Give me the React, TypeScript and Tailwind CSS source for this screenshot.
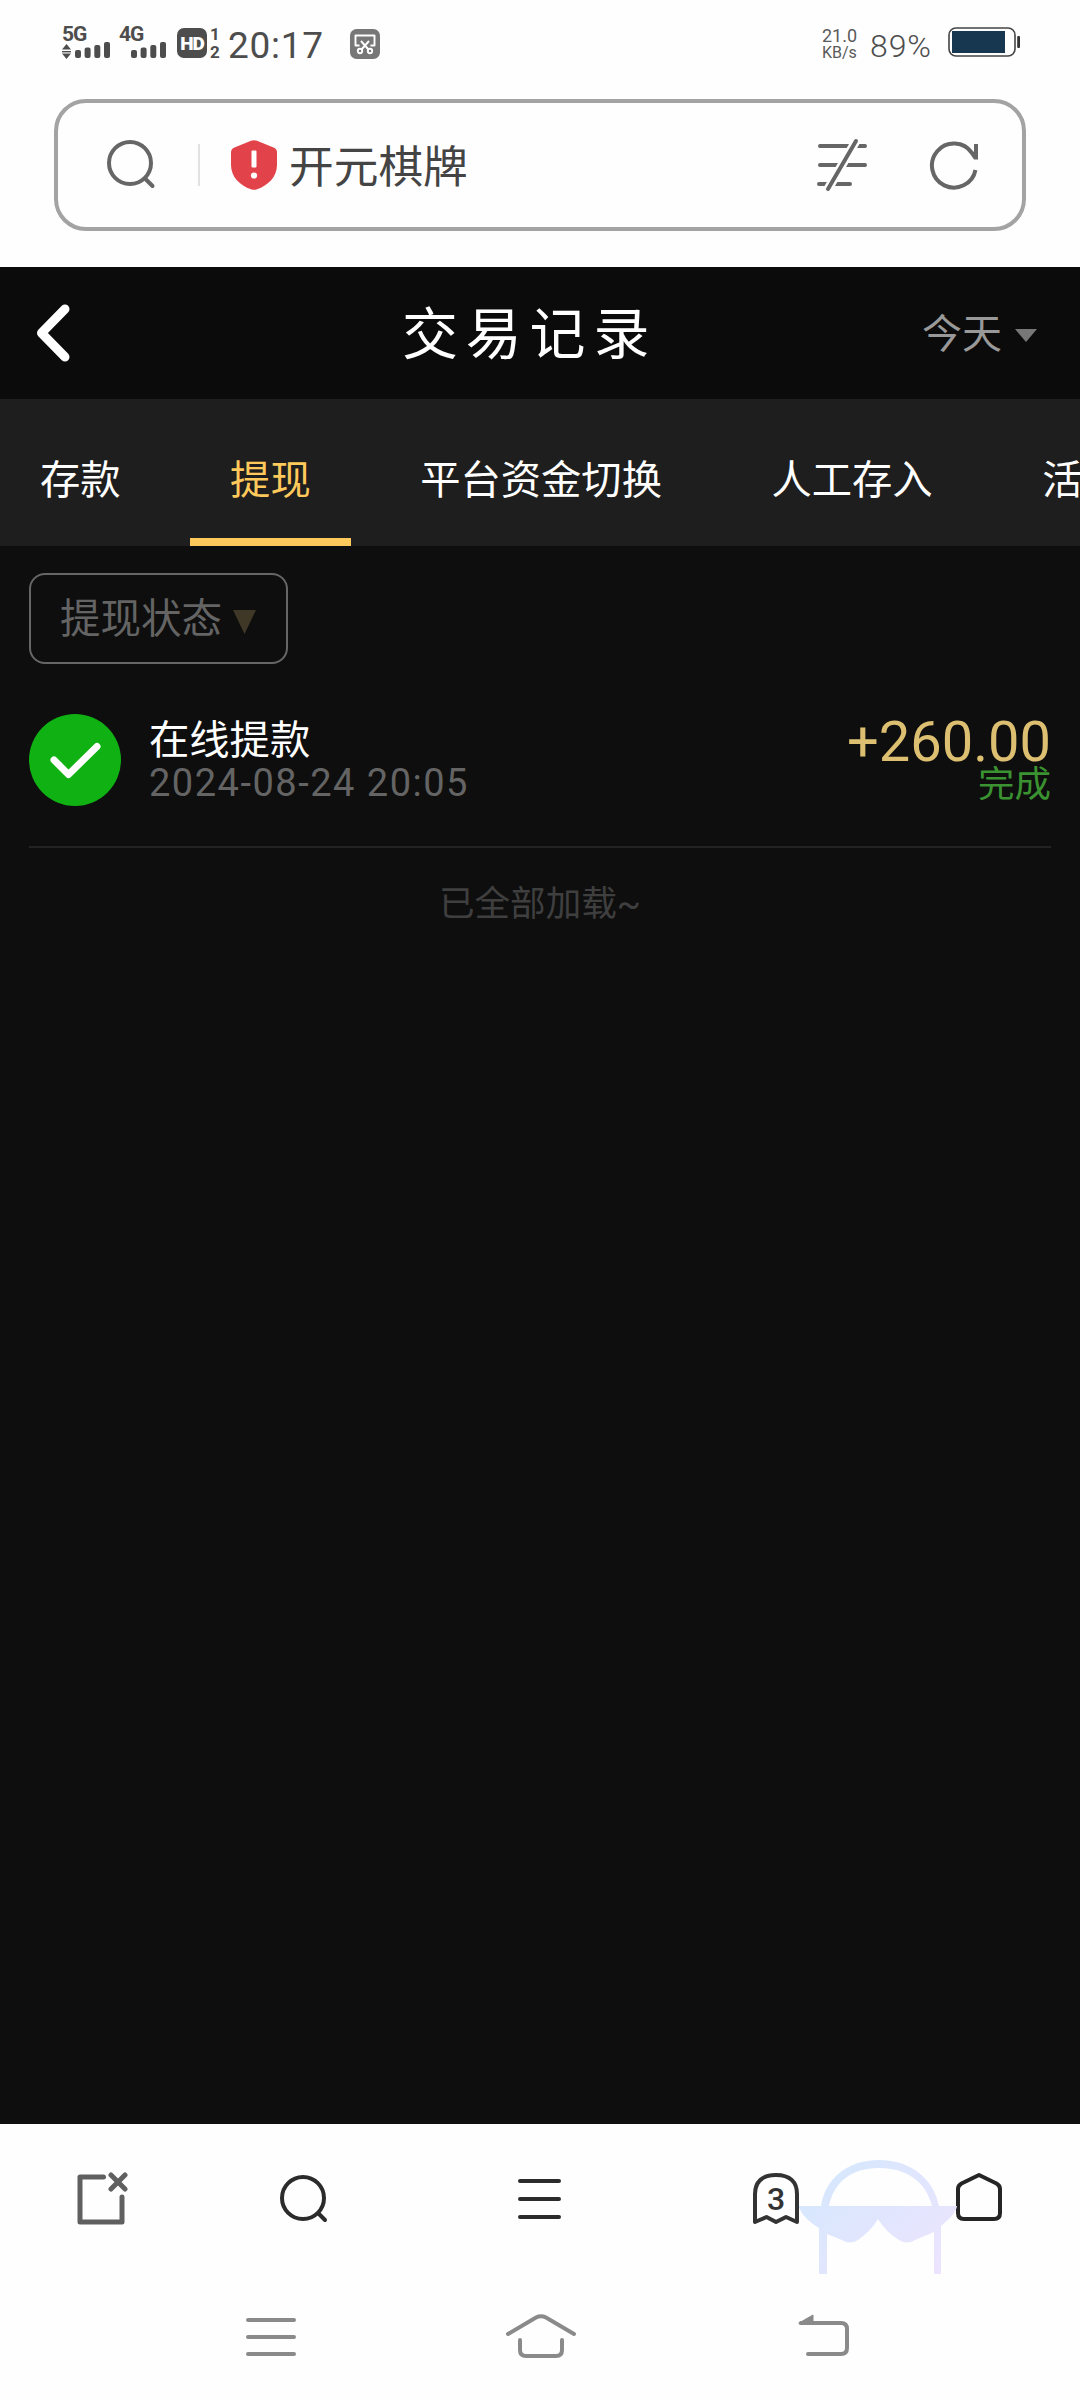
import React from "react";

const tabs = ["存款", "提现", "平台资金切换", "人工存入", "活动"];

function SignalBars() {
  return (
    <svg className="block h-4 w-[35px]" viewBox="0 0 35 16" fill="#4d4d4d">
      <rect x="0" y="8" width="6" height="8" rx="2" />
      <rect x="9.6" y="5.5" width="6" height="10.5" rx="2" />
      <rect x="19.3" y="3" width="6" height="13" rx="2" />
      <rect x="29" y="0" width="6" height="16" rx="2" />
    </svg>
  );
}

function StatusBar() {
  return (
    <div className="flex h-[99px] shrink-0 items-start text-[#4d4d4d]">
      <div className="ml-[62px] mt-[26px] w-[49px]">
        <div className="h-4 text-[21px] font-bold leading-[17px] tracking-[-1px]">5G</div>
        <div className="flex">
          <svg className="mt-[2px] h-[15px] w-[9px]" viewBox="0 0 9 15" fill="#4d4d4d">
            <path d="M4.5 0L9 5.5H0zM4.5 15L0 9.5H9z" />
            <rect x="0" y="7" width="9" height="1.4" />
          </svg>
          <div className="ml-1">
            <SignalBars />
          </div>
        </div>
      </div>
      <div className="ml-2 mt-[26px] w-12">
        <div className="h-4 text-[21px] font-bold leading-[17px] tracking-[-1px]">4G</div>
        <div className="ml-3">
          <SignalBars />
        </div>
      </div>
      <div className="ml-[10px] mt-7 flex h-[30px] w-[30px] items-center justify-center rounded-[7px] bg-[#4d4d4d] text-[19px] font-black leading-none tracking-[-1px] text-white">
        HD
      </div>
      <div className="ml-[3px] mt-[25px] w-[10px] text-center text-[17px] font-bold leading-[18px]">
        <div>1</div>
        <div>2</div>
      </div>
      <div className="ml-2 mt-[24px] w-[100px] text-[37px] leading-[44px] tracking-[0.7px]">20:17</div>
      <svg className="ml-[22px] mt-[29px] h-[30px] w-[30px]" viewBox="0 0 30 30" fill="none" stroke="#fff" strokeWidth="1.9">
        <rect width="30" height="30" rx="6.5" fill="#777" stroke="none" />
        <path d="M9.5 16.5H5.5V6.5h19v10h-4" strokeLinejoin="round" />
        <path d="M11 12l7.5 8.5M19 12l-7.5 8.5" />
        <circle cx="10" cy="22" r="2.2" />
        <circle cx="20" cy="22" r="2.2" />
      </svg>
      <div className="ml-[442px] mt-[27px] w-9 text-[18px] leading-[17px] text-[#5a5a5a]">
        <div>21.0</div>
        <div className="text-[16px]">KB/s</div>
      </div>
      <div className="ml-3 mt-[26px] w-[66px] text-[32px] font-light leading-10 tracking-[0.9px] text-[#4d4d4d]">89%</div>
      <svg className="ml-3 mt-[27px] h-[30px] w-[72px]" viewBox="0 0 72 30">
        <rect x="1" y="1" width="66" height="28" rx="7" fill="none" stroke="#444" strokeWidth="1.6" />
        <rect x="4" y="4" width="53" height="22" fill="#17364f" />
        <rect x="69.2" y="9" width="2.8" height="12" rx="1" fill="#333" />
      </svg>
    </div>
  );
}

function AddressBar() {
  return (
    <div className="mx-[54px] flex h-[132px] shrink-0 items-center rounded-[32px] border-4 border-[#a3a3a3]">
      <svg className="ml-[48px] h-[50px] w-[50px]" viewBox="0 0 50 50" fill="none" stroke="#666" strokeWidth="4" strokeLinecap="round">
        <circle cx="24" cy="23" r="21" />
        <path d="M39 38.500L46.500 46" />
      </svg>
      <div className="ml-[42px] h-[42px] w-[2px] bg-[#e2e2e2]" />
      <svg className="ml-[31px] h-[50px] w-[46px]" viewBox="0 0 46 50">
        <path
          fill="#e2434a"
          d="M20 .8Q23 -.4 26 .8L42.500 7.600Q46 9 46 12.500V25C46 37 37 45.500 26 49.300Q23 50.300 20 49.300C9 45.500 0 37 0 25V12.500Q0 9 3.500 7.600z"
        />
        <rect x="20.500" y="10.500" width="5" height="17" rx="1" fill="#fff" />
        <circle cx="23" cy="35.500" r="3.100" fill="#fff" />
      </svg>
      <div className="ml-[12px] mt-[6px] text-[44.700px] leading-[60px] text-[#444]">开元棋牌</div>
      <svg className="ml-auto h-[54px] w-[54px]" viewBox="0 0 54 54" fill="none" stroke="#666" strokeWidth="4" strokeLinecap="round">
        <path d="M5 8H50M5 27H50M4 46H35" />
        <path d="M41 3L13 51" stroke="#fff" strokeWidth="9" strokeLinecap="butt" />
        <path d="M41 3L13 51" />
      </svg>
      <svg className="ml-[60px] mr-[43px] h-[50px] w-[50px]" viewBox="0 0 50 50" fill="none" stroke="#666" strokeWidth="4">
        <path d="M46.500 30A22 22 0 1 1 43 13L46.500 18" />
        <path d="M47 4V19.500" />
      </svg>
    </div>
  );
}

function TitleBar() {
  return (
    <div className="flex h-[132px] items-center bg-[#0b0b0b]">
      <svg className="ml-[35px] h-[60px] w-[36px]" viewBox="0 0 36 60" fill="none" stroke="#fff" strokeWidth="9" strokeLinecap="round" strokeLinejoin="round">
        <path d="M30 6L6.500 30L30 54" />
      </svg>
      <div className="ml-[331px] mt-[3px] w-[260px] whitespace-nowrap text-[56px] leading-[80px] tracking-[7.800px] text-white">交易记录</div>
      <div className="ml-[260px] mt-[3px] text-[40px] leading-[60px] text-[#999]">今天</div>
      <svg className="ml-[13px] mt-1 h-[13px] w-[22px]" viewBox="0 0 22 13">
        <path d="M0 0H22L11 13z" fill="#777" />
      </svg>
    </div>
  );
}

function Tabs() {
  return (
    <div className="flex h-[147px] gap-[29.500px] overflow-hidden bg-[#1e1e1e]">
      {tabs.map((tab) => (
        <div
          key={tab}
          className={
            tab === "提现"
              ? "flex h-full shrink-0 items-center border-y-8 border-t-transparent border-b-[#ffc95c] px-10 text-[40.300px] text-[#ffc95c]"
              : "flex h-full shrink-0 items-center px-10 text-[40.300px] text-white"
          }
        >
          <span className="mt-[18px]">{tab}</span>
        </div>
      ))}
    </div>
  );
}

function Records() {
  return (
    <div className="h-[1578px] bg-[#0e0e0e] px-[29px] pt-[27px]">
      <div className="flex h-[91px] w-[259px] items-center rounded-[16px] border-2 border-[#666]">
        <span className="ml-[29px] mt-px text-[40.500px] leading-[60px] text-[#646464]">提现状态</span>
        <svg className="ml-[11px] mt-[6px] h-6 w-[23px]" viewBox="0 0 23 24">
          <path d="M0 0H23L11.500 24z" fill="#3f3826" />
        </svg>
      </div>
      <div className="flex h-[184px] border-b-2 border-[#232323]">
        <svg className="mt-[50px] h-[92px] w-[92px]" viewBox="0 0 92 92" fill="none">
          <circle cx="46" cy="46" r="46" fill="#0fb212" />
          <path d="M25 46L39.500 60.500L68 32.500" stroke="#fff" strokeWidth="7" strokeLinecap="round" strokeLinejoin="round" />
        </svg>
        <div className="ml-[28px] mt-[53px]">
          <div className="text-[40.300px] leading-[48px] text-white">在线提款</div>
          <div className="mt-[-4px] text-[38px] leading-[44px] tracking-[1.500px] text-[#646464]">2024-08-24 20:05</div>
        </div>
        <div className="ml-auto mt-[53px] text-right">
          <div className="text-[56px] leading-[50px] text-[#dcbf70]">+260.00</div>
          <div className="mt-[-3px] text-[36.500px] leading-[42px] text-[#3a9230]">完成</div>
        </div>
      </div>
      <div className="mt-[31px] text-center text-[35.600px] leading-[50px] text-[#3f3f3f]">已全部加载~</div>
    </div>
  );
}

function BrowserToolbar() {
  return (
    <div className="relative flex h-[152px] items-start bg-[#fefefe]">
      {/* sunglasses badge behind the tab counter and home */}
      <svg className="absolute left-[799px] top-[36px] h-[114px] w-[159px]" viewBox="0 0 159 114">
        <defs>
          <linearGradient id="shade" x1="0" y1="0" x2="1" y2="0.8">
            <stop offset="0" stopColor="#d2e8fd" />
            <stop offset="1" stopColor="#ece4fe" />
          </linearGradient>
        </defs>
        <path
          fill="url(#shade)"
          d="M0 46H22C26 20 47 0 80 0S135 20 140 46H158Q157 54 142 66V114H135V72L116 80Q108 85 100 80Q87 72 79 59Q72 71 59 80Q51 85 43 80L28 74V114H20V68Q6 60 0 48zM30 46H133C127 22 108 8 80 8S35 22 30 46z"
        />
      </svg>
      <svg className="ml-[76px] mt-[48px] h-[54px] w-[54px]" viewBox="0 0 54 54" fill="none" stroke="#606060" strokeWidth="5" strokeLinecap="round" strokeLinejoin="round">
        <path d="M27.500 5H4V50H46V25" />
        <path d="M35 3L49 17M49 3L35 17" />
      </svg>
      <svg className="ml-[149px] mt-[50px] h-[50px] w-[50px]" viewBox="0 0 50 50" fill="none" stroke="#2b2b2b" strokeWidth="4" strokeLinecap="round">
        <circle cx="24" cy="24" r="21" />
        <path d="M40 40L46 46" />
      </svg>
      <svg className="ml-[188px] mt-[53px] h-11 w-[46px]" viewBox="0 0 46 44" fill="none" stroke="#2b2b2b" strokeWidth="4" strokeLinecap="round">
        <path d="M3 4H42M3 22H42M3 40H42" />
      </svg>
      <div className="relative ml-[189px] mt-[48px] flex h-[54px] w-[48px] justify-center">
        <svg className="absolute left-0 top-0 h-[54px] w-[48px]" viewBox="0 0 48 54" fill="none" stroke="#333" strokeWidth="4" strokeLinecap="round" strokeLinejoin="round">
          <path d="M3 50V22C3 10 10 3 24 3S45 10 45 22V50L34 45L24 50L14.500 45z" />
        </svg>
        <span className="relative mt-[7px] text-[32px] font-medium leading-10 text-[#333]">3</span>
      </div>
      <svg className="ml-[154px] mt-[48px] h-[50px] w-[50px]" viewBox="0 0 50 50" fill="none" stroke="#252525" strokeWidth="4" strokeLinejoin="round">
        <path d="M25 3L42.500 11.500Q46 13.500 46 17V41Q46 47 40 47H10Q4 47 4 41V17Q4 13.500 7.500 11.500z" />
      </svg>
    </div>
  );
}

function SystemNav() {
  return (
    <div className="flex h-[124px] items-start bg-[#fefefe]">
      <svg className="ml-[245px] mt-[40px] h-10 w-[52px]" viewBox="0 0 52 40" fill="none" stroke="#8a8a8a" strokeWidth="4" strokeLinecap="round">
        <path d="M3 4H49M3 21H49M3 38H49" />
      </svg>
      <svg className="ml-[208px] mt-[37px] h-[46px] w-[72px]" viewBox="0 0 72 46" fill="none" stroke="#8a8a8a" strokeWidth="4" strokeLinecap="round">
        <path d="M3 21L31 4.500Q36 2 41 4.500L69 21" />
        <path d="M15 27V37Q15 43 21 43H51Q57 43 57 37V27" />
      </svg>
      <svg className="ml-[221px] mt-[38px] h-[44px] w-[52px]" viewBox="0 0 52 44" fill="none" stroke="#8a8a8a" strokeWidth="4" strokeLinecap="round">
        <path d="M3 9H43Q49 9 49 15V34Q49 40 43 40H10" />
        <path d="M1 9L15 1V10H2z" fill="#8a8a8a" strokeWidth="1" strokeLinejoin="round" />
      </svg>
    </div>
  );
}

export default function App() {
  return (
    <div className="flex h-[2400px] w-[1080px] flex-col overflow-hidden bg-[#fefefe] font-['Roboto','Noto_Sans_CJK_SC',sans-serif]">
      <StatusBar />
      <AddressBar />
      <div className="mt-9">
        <TitleBar />
        <Tabs />
        <Records />
      </div>
      <BrowserToolbar />
      <SystemNav />
    </div>
  );
}
